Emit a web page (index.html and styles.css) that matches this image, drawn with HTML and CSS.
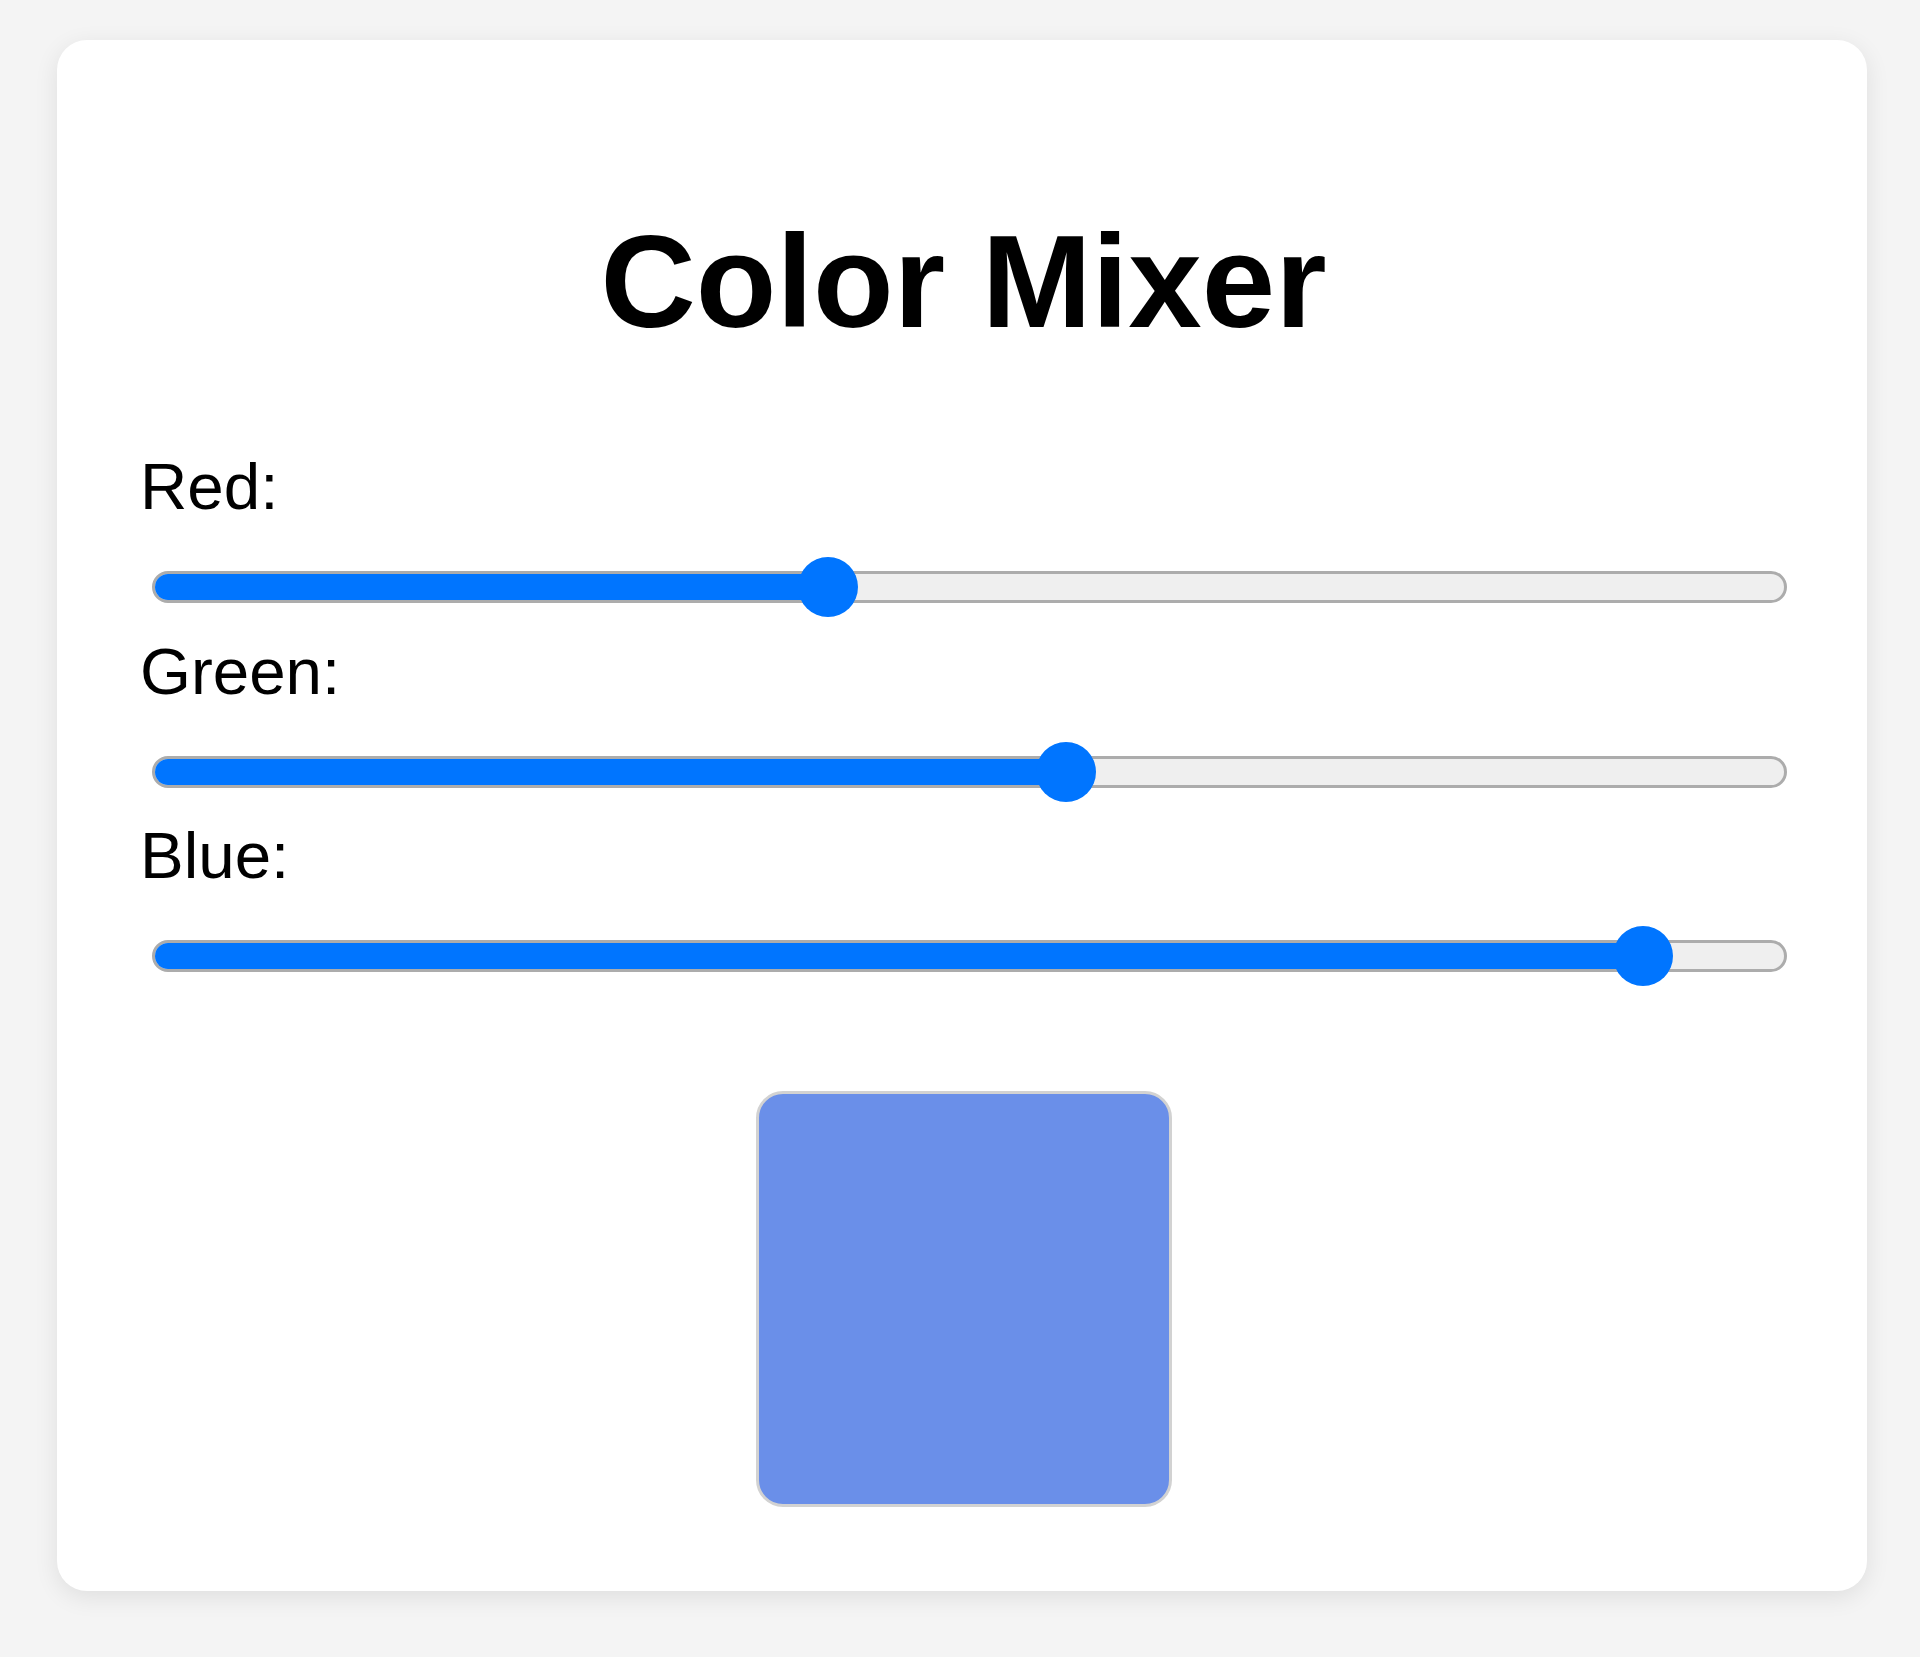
FILE: index.html
```html
<!DOCTYPE html>
<html lang="en">
<head>
<meta charset="utf-8">
<title>Color Mixer</title>
<link rel="stylesheet" href="styles.css">
</head>
<body>
  <main class="card">
    <h1 class="title">Color Mixer</h1>
    <div class="control">
      <label class="label">Red:</label>
      <div class="slider" role="slider" aria-valuemin="0" aria-valuemax="255" aria-valuenow="106">
        <div class="track"><div class="fill" style="width:41.35%"></div></div>
        <div class="thumb" style="left:calc(41.35% - 30px)"></div>
      </div>
    </div>
    <div class="control">
      <label class="label">Green:</label>
      <div class="slider" role="slider" aria-valuemin="0" aria-valuemax="255" aria-valuenow="143">
        <div class="track"><div class="fill" style="width:55.9%"></div></div>
        <div class="thumb" style="left:calc(55.9% - 30px)"></div>
      </div>
    </div>
    <div class="control">
      <label class="label">Blue:</label>
      <div class="slider" role="slider" aria-valuemin="0" aria-valuemax="255" aria-valuenow="233">
        <div class="track"><div class="fill" style="width:91.2%"></div></div>
        <div class="thumb" style="left:calc(91.2% - 30px)"></div>
      </div>
    </div>
    <div class="swatch" style="background:#6a8fe9"></div>
  </main>
</body>
</html>
```
FILE: styles.css
```css
* { box-sizing: border-box; }

html, body {
  margin: 0;
  padding: 0;
}

body {
  background: #f4f4f4;
  font-family: "Liberation Sans", Arial, sans-serif;
  color: #000;
  padding: 40px 0 66px;
}

.card {
  margin: 0 53px 0 57px;
  background: #fff;
  border-radius: 30px;
  box-shadow: 0 6px 24px rgba(0, 0, 0, 0.09);
  padding: 166px 80px 84px 83px;
}

.title {
  margin: 0 0 90px;
  font-size: 132px;
  line-height: 152px;
  font-weight: bold;
  text-align: center;
}

.label {
  display: block;
  font-size: 65.5px;
  line-height: 78px;
}

.control {
  display: flow-root;
}

.slider {
  position: relative;
  height: 60px;
  margin: 31px 0 15.5px 12px;
  display: flex;
  align-items: center;
}

.track {
  width: 100%;
  height: 32px;
  border-radius: 16px;
  background: #efefef;
  border: 3px solid #acacac;
  position: relative;
  overflow: hidden;
}

.fill {
  position: absolute;
  left: -3px;
  top: -3px;
  bottom: -3px;
  background: #0075ff;
  border-radius: 16px 0 0 16px;
}

.thumb {
  position: absolute;
  top: 0;
  width: 60px;
  height: 60px;
  border-radius: 50%;
  background: #0075ff;
}

.swatch {
  width: 416px;
  height: 416px;
  margin: 89.5px auto 0;
  border: 3px solid #d2d2d2;
  border-radius: 27px;
}
```
